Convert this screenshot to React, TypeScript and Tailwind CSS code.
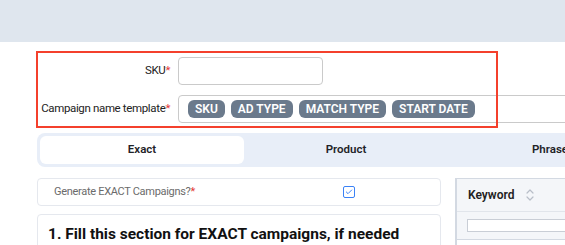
import { Check } from 'lucide-react';

const chips = ['SKU', 'AD TYPE', 'MATCH TYPE', 'START DATE'];
const tabs = ['Exact', 'Product', 'Phrase'];

function SortIcon() {
  return (
    <svg width="8" height="14" viewBox="0 0 8 14" fill="none" stroke="#b8bec8" strokeWidth="1.2" strokeLinecap="round" strokeLinejoin="round">
      <path d="M1 5 L4 2 L7 5" />
      <path d="M1 9 L4 12 L7 9" />
    </svg>
  );
}

export default function App() {
  return (
    <div className="relative w-[565px] h-[245px] overflow-hidden bg-white text-[#222] font-['Roboto','Liberation_Sans',sans-serif]">
      <div className="h-[42px] bg-[#dfe6ee]" />

      <div className="pl-[36px] pt-[15px] flex flex-col gap-[10px]">
        <div className="flex items-center">
          <label className="w-[134px] whitespace-nowrap text-right text-[11.5px] tracking-[-0.35px] text-[#222]">
            SKU<span className="text-[#e53935]">*</span>
          </label>
          <div className="ml-[8px] w-[145px] h-[28px] border border-[#cacaca] rounded-[4px]" />
        </div>
        <div className="flex items-center">
          <label className="w-[134px] shrink-0 whitespace-nowrap text-right text-[11.5px] tracking-[-0.35px] text-[#222]">
            Campaign name template<span className="text-[#e53935]">*</span>
          </label>
          <div className="ml-[8px] w-[420px] shrink-0 h-[28px] border border-[#cacaca] rounded-[4px] flex items-center gap-[6px] pl-[9px]">
            {chips.map((c) => (
              <span key={c} className="h-[18px] px-[7px] rounded-[6px] bg-[#6b7a8c] text-white text-[12px] font-semibold leading-[18px] whitespace-nowrap">
                {c}
              </span>
            ))}
          </div>
        </div>
      </div>

      <div className="ml-[37px] mt-[10px] w-[620px] h-[34px] bg-[#e8eef8] rounded-[8px] p-[3px] flex">
        {tabs.map((t, i) => (
          <div
            key={t}
            className={`w-[204px] shrink-0 h-[28px] flex items-center justify-center text-[11.5px] font-semibold text-[#1f2328] ${i === 0 ? 'bg-white rounded-[6px]' : ''}`}
          >
            {t}
          </div>
        ))}
      </div>

      <div className="ml-[37px] mt-[11px] flex gap-[14px]">
        <div className="w-[404px] shrink-0 flex flex-col gap-[8px]">
          <div className="h-[28px] border border-[#e5e8ee] rounded-[4px] flex items-center pl-[16px]">
            <span className="w-[289px] text-[11px] tracking-[-0.3px] text-[#6b6b6b]">
              Generate EXACT Campaigns?<span className="text-[#e53935]">*</span>
            </span>
            <span className="w-[12px] h-[12px] border border-[#3b82f6] rounded-[2px] flex items-center justify-center">
              <Check size={8} strokeWidth={3} className="text-[#3b82f6]" />
            </span>
          </div>
          <div className="h-[60px] border border-[#e5e8ee] rounded-[4px] pl-[10px] pt-[9px]">
            <h2 className="text-[15.5px] font-bold text-[#111] leading-[20px] whitespace-nowrap">
              1. Fill this section for EXACT campaigns, if needed
            </h2>
          </div>
        </div>

        <div className="w-[200px] shrink-0 border-l-2 border-t border-[#d3d9e2]">
          <div className="h-[33px] bg-[#f4f6f9] flex items-center pl-[11px] gap-[12px] border-b border-[#e1e5eb]">
            <span className="text-[12px] font-semibold text-[#222]">Keyword</span>
            <SortIcon />
          </div>
          <div className="h-[28px] bg-[#f4f6f9] flex items-center pl-[10px] border-b border-[#d3d9e2]">
            <div className="w-[180px] h-[13px] bg-white border border-[#c9ced6]" />
          </div>
          <div className="pl-[11px] pt-[2px] text-[12px] text-[#222]">car wash soap</div>
        </div>
      </div>

      <div className="absolute left-[36px] top-[51px] w-[462px] h-[77px] border-2 border-[#f4402c] pointer-events-none" />
    </div>
  );
}
